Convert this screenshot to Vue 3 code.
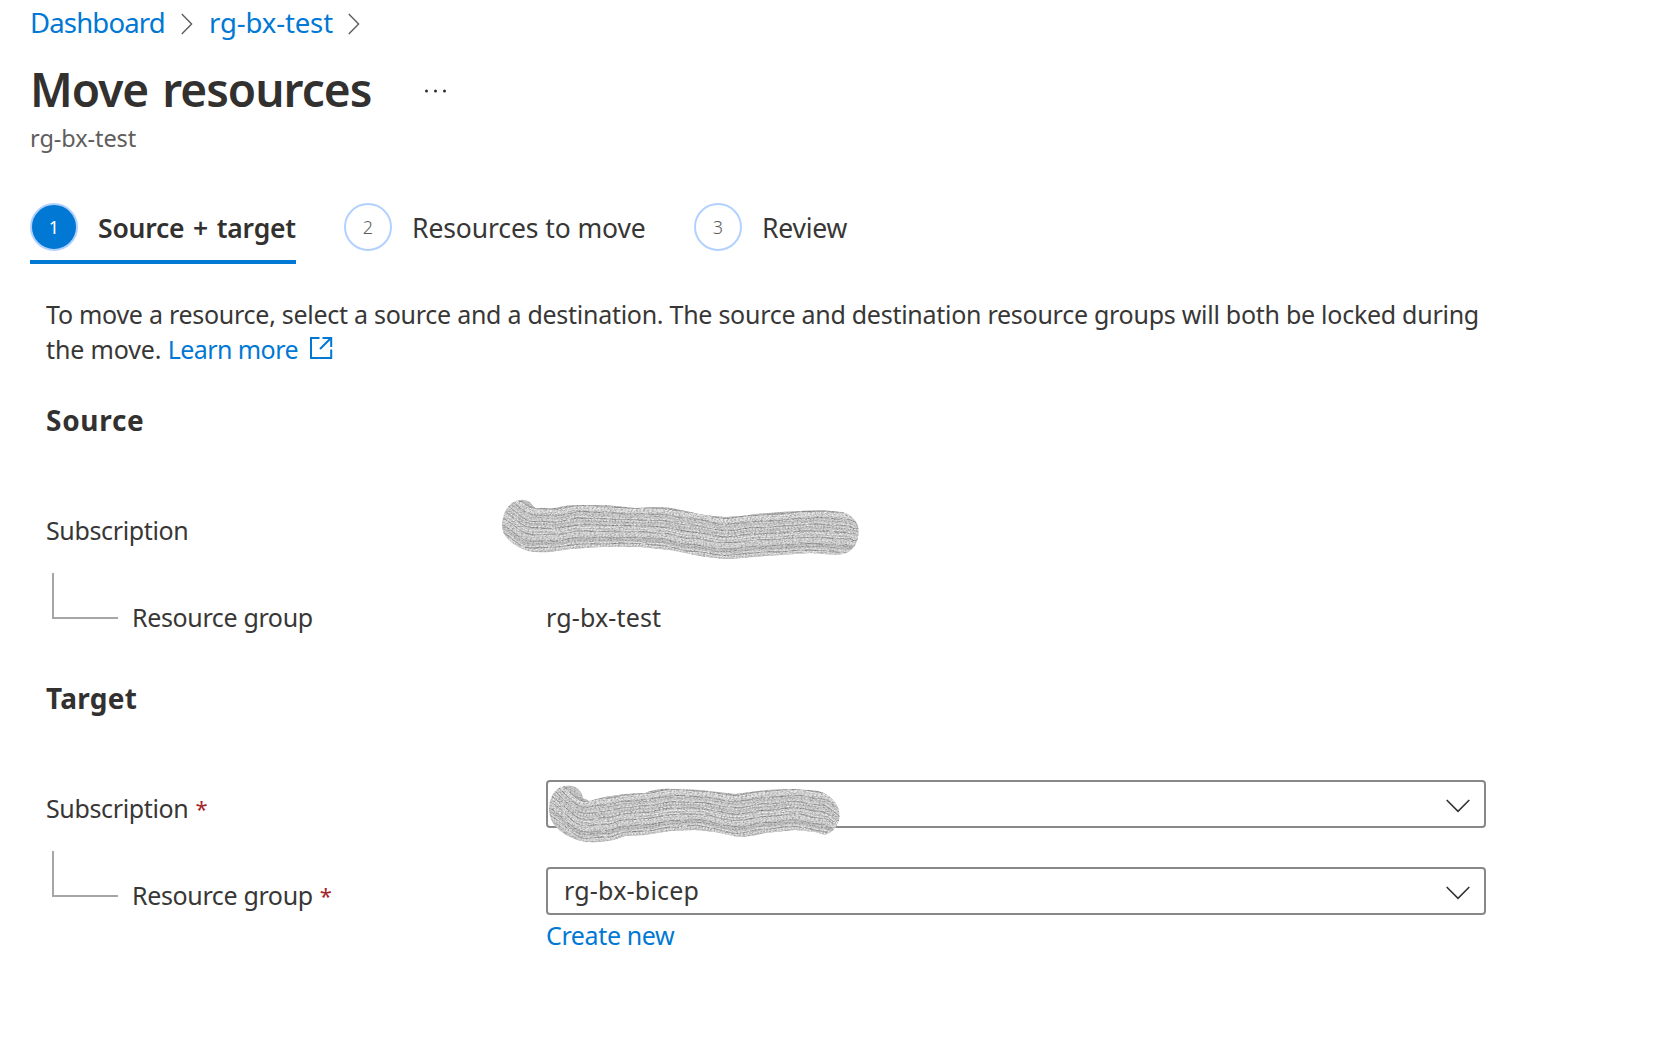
<script setup>
const steps = [
  { n: 1, label: 'Source + target', cls: 'active' },
  { n: 2, label: 'Resources to move', cls: 'second' },
  { n: 3, label: 'Review', cls: 'third' },
]

// Value of a polyline at x, eased between its knots
function at(knots, x) {
  let i = 0
  while (i < knots.length - 2 && x > knots[i + 1][0]) i++
  const [x0, y0] = knots[i]
  const [x1, y1] = knots[i + 1]
  const k = Math.min(1, Math.max(0, (x - x0) / (x1 - x0)))
  return y0 + (y1 - y0) * k * k * (3 - 2 * k)
}

// Brush strokes that run between an upper and a lower edge
function strokes(top, bottom, from, to) {
  const tones = ['#9c9c9c', '#dedede', '#f0f0f0', '#c2c2c2', '#e6e6e6', '#b6b6b6', '#ececec']
  const list = []
  for (let i = 0; i <= 34; i++) {
    let d = ''
    for (let x = from; x <= to; x += 4) {
      const a = at(top, x)
      const rough = Math.max(0, 1 - (to - x) / 34) * 1.4
      const y = a + ((at(bottom, x) - a) * i) / 34 + Math.sin(x * 0.21 + i * 1.7) * 0.35 + Math.sin(x * 0.7 + i * 0.5) * rough
      d += (d ? 'L' : 'M') + x + ' ' + y.toFixed(1)
    }
    const groove = i % 5 === 1
    list.push({
      d,
      tone: groove ? '#929292' : tones[(i * 3 + (i >> 2)) % 7],
      dash: groove ? '23 2 11 4' : ['2 1', '1 2', '3 1', '2 2'][i % 4],
      shift: (i * 7) % 19,
    })
  }
  return list
}

const marks = {
  source: {
    w: 380, h: 80,
    outline: 'M12 35Q13 20 22 13Q32 7 40 12L45 18L65 18Q75 15 90 15L115 15L145 18L170 17Q185 18 200 22Q215 26 235 27Q250 27 265 24L290 22L330 20L352 22Q364 25 368 36Q370 48 364 57Q357 65 346 65L320 63L275 66L240 69Q220 68 205 65L180 60L150 57L110 57L80 59L60 62Q48 63 38 61Q25 57 17 48Q12 43 12 35Z',
    lines: strokes(
      [[8, -4], [45, 17], [65, 18], [90, 14], [145, 17], [170, 17], [200, 21], [235, 27], [265, 24], [330, 20], [352, 21], [374, 27]],
      [[8, 46], [38, 62], [65, 61], [90, 58], [145, 57], [170, 59], [200, 65], [235, 69], [275, 66], [320, 64], [352, 66], [374, 66]],
      8, 374),
  },
  target: {
    w: 330, h: 80,
    outline: 'M19 38Q20 24 29 18Q40 13 47 18Q52 22 53 28L59 31L75 27L95 24L115 23Q127 18 143 19L170 20L205 24L235 20L265 19L288 21Q299 24 305 32Q312 43 308 53Q304 62 295 65L285 62L265 60L235 63Q220 67 208 67L185 62L165 60L140 61L115 65L95 66Q85 70 78 71Q60 74 47 70Q33 65 25 56Q19 49 19 38Z',
    lines: strokes(
      [[14, 2], [55, 30], [75, 27], [95, 24], [115, 22], [143, 18], [170, 20], [205, 24], [235, 20], [265, 18], [292, 21], [314, 34]],
      [[14, 48], [55, 72], [78, 71], [95, 66], [115, 65], [143, 61], [165, 59], [208, 67], [235, 63], [265, 60], [292, 65], [314, 74]],
      14, 314),
  },
}
</script>

<template>
  <main class="page">
    <nav class="crumbs">
      <a class="crumb dash">Dashboard</a>
      <svg class="sep" width="12" height="22" viewBox="0 0 12 22"><path d="M.8 1 10.6 11 .8 21" /></svg>
      <a class="crumb group">rg-bx-test</a>
      <svg class="sep" width="12" height="22" viewBox="0 0 12 22"><path d="M.8 1 10.6 11 .8 21" /></svg>
    </nav>

    <header>
      <div class="title-row">
        <h1>Move resources</h1>
        <svg class="more" width="24" height="4" viewBox="0 0 24 4">
          <circle cx="2.5" cy="2" r="1.5" /><circle cx="11.5" cy="2" r="1.5" /><circle cx="20.5" cy="2" r="1.5" />
        </svg>
      </div>
      <div class="subtitle">rg-bx-test</div>
    </header>

    <div class="steps">
      <div v-for="s in steps" :key="s.n" class="step" :class="s.cls">
        <span class="num">{{ s.n }}</span>
        <span class="label">{{ s.label }}</span>
      </div>
    </div>

    <section class="body">
      <p class="intro">
        To move a resource, select a source and a destination. The source and destination resource groups will both be locked during<br />
        <span class="tail">the move. </span><a class="learn">Learn more</a>
        <svg class="ext" width="24" height="24" viewBox="0 0 24 24"><path d="M10.5 2H2v20h20.2v-8.500M13.500 2h8.700v9M22 2 11 13" /></svg>
      </p>

      <h2 class="h-source">Source</h2>
      <div class="row">
        <div class="name">Subscription</div>
        <div class="value">
          <svg class="mark on-text" :width="marks.source.w" :height="marks.source.h">
            <defs>
              <clipPath id="clip-source"><path :d="marks.source.outline" /></clipPath>
              <filter id="grain" x="0" y="0" width="100%" height="100%" color-interpolation-filters="sRGB">
                <feTurbulence type="fractalNoise" baseFrequency="0.45 0.8" numOctaves="2" seed="4" />
                <feColorMatrix values="3 0 0 0 -0.72  3 0 0 0 -0.72  3 0 0 0 -0.72  0 0 0 0 1" />
              </filter>
            </defs>
            <g clip-path="url(#clip-source)">
              <rect width="100%" height="100%" fill="#c0c0c0" />
              <path v-for="(l, i) in marks.source.lines" :key="i" :d="l.d" :stroke="l.tone" :stroke-dasharray="l.dash" :stroke-dashoffset="l.shift" fill="none" />
              <rect class="grain" width="100%" height="100%" filter="url(#grain)" />
            </g>
          </svg>
        </div>
      </div>
      <div class="row nested">
        <div class="name"><i class="elbow"></i><span>Resource group</span></div>
        <div class="value plain">rg-bx-test</div>
      </div>

      <h2 class="h-target">Target</h2>
      <div class="row">
        <div class="name low">Subscription<b class="req">*</b></div>
        <div class="select">
          <svg class="mark on-select" :width="marks.target.w" :height="marks.target.h">
            <defs><clipPath id="clip-target"><path :d="marks.target.outline" /></clipPath></defs>
            <g clip-path="url(#clip-target)">
              <rect width="100%" height="100%" fill="#c0c0c0" />
              <path v-for="(l, i) in marks.target.lines" :key="i" :d="l.d" :stroke="l.tone" :stroke-dasharray="l.dash" :stroke-dashoffset="l.shift" fill="none" />
              <rect class="grain" width="100%" height="100%" filter="url(#grain)" />
            </g>
          </svg>
          <svg class="caret" width="24" height="14" viewBox="0 0 24 14"><path d="M.7 1 12 12.300 23.300 1" /></svg>
        </div>
      </div>
      <div class="row nested">
        <div class="name low"><i class="elbow"></i><span>Resource group</span><b class="req">*</b></div>
        <div class="select">
          <span class="picked">rg-bx-bicep</span>
          <svg class="caret" width="24" height="14" viewBox="0 0 24 14"><path d="M.7 1 12 12.300 23.300 1" /></svg>
        </div>
      </div>
      <a class="create">Create new</a>
    </section>
  </main>
</template>

<style>
body { margin: 0; background: #fff; }
</style>

<style scoped>
.page {
  box-sizing: border-box;
  width: 1654px;
  height: 1060px;
  padding: 5px 0 0 30px;
  overflow: hidden;
  background: #fff;
  color: #383736;
  font-family: "Noto Sans", "Open Sans", sans-serif;
  font-size: 25px;
}
a { color: #0078d4; }
svg { display: block; flex: none; fill: none; }

.crumbs { display: flex; align-items: center; height: 36px; font-size: 27.5px; line-height: 36px; }
.crumb { white-space: nowrap; }
.dash { width: 151px; letter-spacing: -0.84px; }
.group { width: 139px; margin-left: 16px; letter-spacing: -0.12px; }
.sep { margin-top: 2px; stroke: #605e5c; stroke-width: 1.4; }

.title-row { display: flex; align-items: center; height: 64px; margin-top: 16px; }
h1 { width: 394px; margin: 0; color: #323130; font-size: 46px; font-weight: 600; line-height: 64px; letter-spacing: -1px; word-spacing: 3px; white-space: nowrap; }
.more { margin-top: 4px; fill: #323130; }
.subtitle { margin: 1px 0 0; font-size: 23.5px; line-height: 32px; letter-spacing: -0.08px; color: #605e5c; }

.steps { display: flex; gap: 48px; margin-top: 49px; }
.step { display: flex; align-items: center; gap: 20px; box-sizing: border-box; height: 61px; padding-bottom: 9px; border-bottom: 4px solid transparent; white-space: nowrap; }
.num { box-sizing: border-box; flex: none; width: 48px; height: 48px; border: 2px solid #b3d1ff; border-radius: 50%; font-size: 18px; line-height: 45px; text-align: center; color: #605e5c; font-weight: 300; }
.label { font-size: 26.5px; line-height: 36px; padding-top: 2px; }
.active { width: 266px; border-color: #0078d4; }
.active .num { background: #0078d4; color: #fff; font-weight: 400; }
.active .label { color: #323130; font-weight: 600; letter-spacing: -0.2px; word-spacing: 2px; }
.second { width: 302px; }
.second .label { letter-spacing: -0.1px; }
.third .label { letter-spacing: -0.22px; }

.body { padding-left: 16px; margin-top: 33px; }
.intro { margin: 0; line-height: 35px; letter-spacing: -0.27px; white-space: nowrap; height: 70px; }
.tail { letter-spacing: -0.14px; }
.learn { margin-right: 5px; letter-spacing: -0.57px; }
.ext { display: inline-block; margin-left: 6px; vertical-align: -1px; stroke: #0078d4; stroke-width: 2; }

h2 { margin: 0; color: #323130; font-size: 28px; font-weight: 700; line-height: 36px; }
.h-source { margin: 35px 0 68px; letter-spacing: 0.7px; }
.h-target { margin: 39px 0 64px; letter-spacing: 0.3px; }

.row { display: flex; height: 48px; }
.nested { margin-top: 39px; }
.name { display: flex; flex: none; width: 500px; line-height: 48px; letter-spacing: -0.36px; }
.low { padding-top: 4px; }
.elbow { box-sizing: border-box; width: 66px; height: 46px; margin: -20px 14px 0 6px; border: solid #a6a6a6; border-width: 0 0 2px 2px; }
.req { margin-left: 7px; font-size: 22px; font-weight: 400; color: #a4262c; }
.value { position: relative; width: 940px; line-height: 48px; }
.plain { letter-spacing: 0.15px; }
.select { position: relative; display: flex; align-items: center; box-sizing: border-box; width: 940px; height: 48px; padding: 0 15px 0 16px; border: 2px solid #8a8886; border-radius: 4px; }
.picked { line-height: 40px; margin-top: -2px; letter-spacing: 0.2px; }
.caret { margin-left: auto; margin-top: 3px; margin-right: -1px; stroke: #323130; stroke-width: 1.6; }
.mark { position: absolute; }
.grain { opacity: 0.17; }
.on-text { left: -56px; top: -16px; }
.on-select { left: -18px; top: -12px; }
.create { display: block; margin: 2px 0 0 500px; line-height: 36px; letter-spacing: -0.38px; }
</style>
